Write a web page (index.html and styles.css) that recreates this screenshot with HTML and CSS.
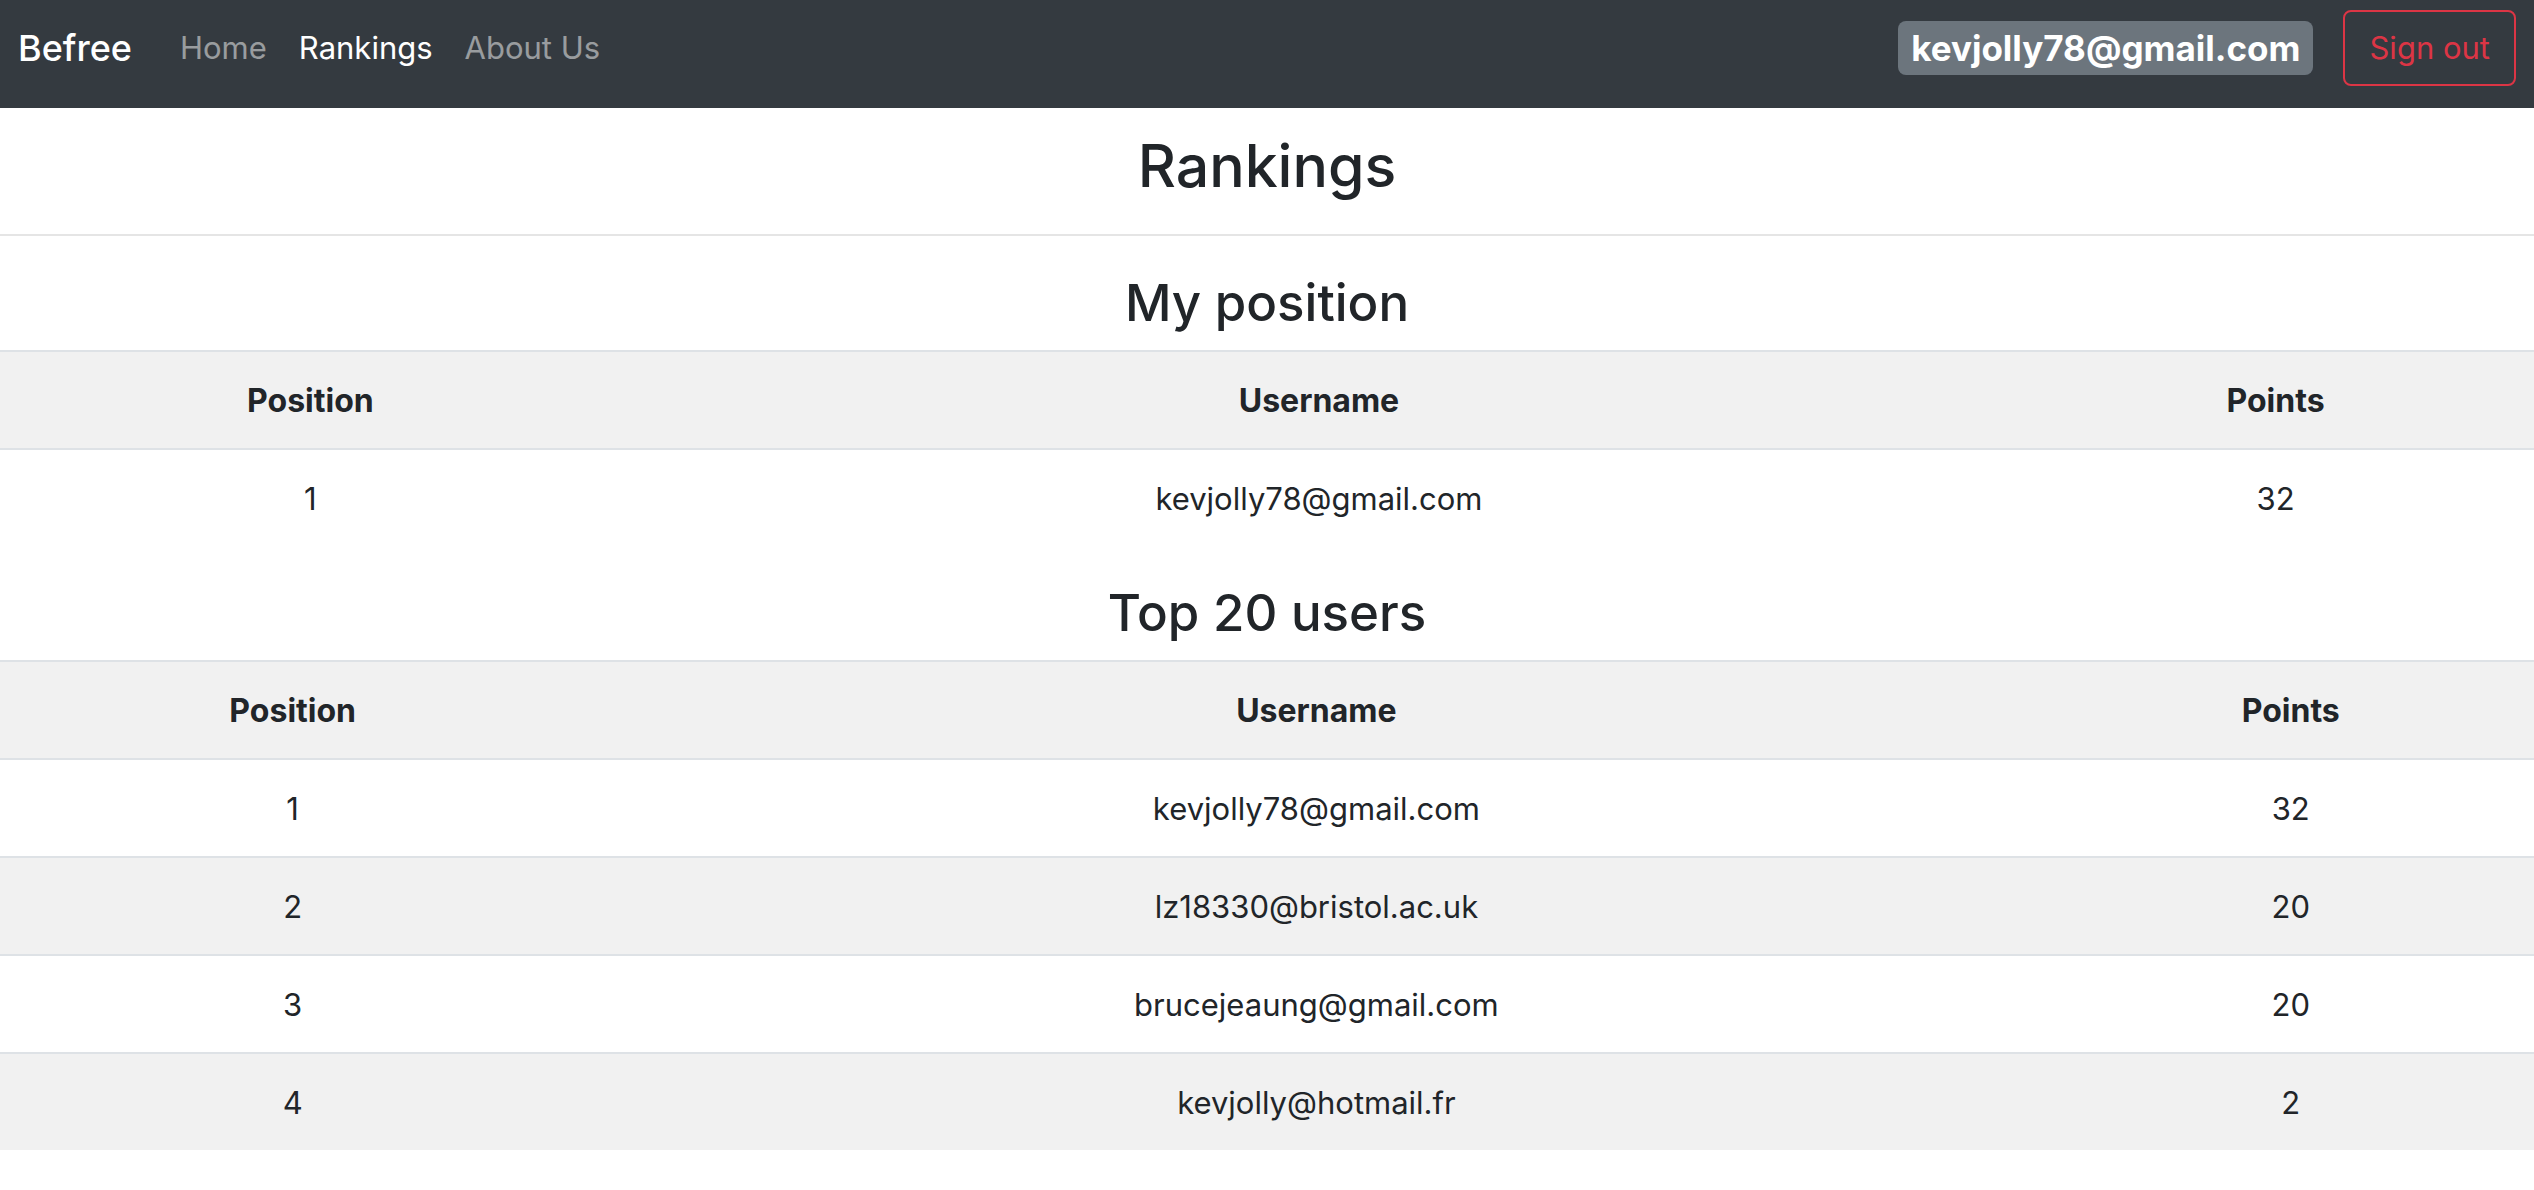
FILE: index.html
```html
<!DOCTYPE html>
<html lang="en">
<head>
<meta charset="utf-8">
<title>Befree - Rankings</title>
<link rel="stylesheet" href="styles.css">
</head>
<body>
<header class="navbar">
  <a class="brand" href="#">Befree</a>
  <nav class="nav">
    <a class="nav-link" href="#">Home</a>
    <a class="nav-link active" href="#" aria-current="page">Rankings</a>
    <a class="nav-link" href="#">About Us</a>
  </nav>
  <span class="badge">kevjolly78@gmail.com</span>
  <button class="sign-out" type="button">Sign out</button>
</header>
<main>
  <h1 class="title">Rankings</h1>
  <hr class="rule">
  <section class="section">
    <h2 class="subtitle">My position</h2>
    <table class="table table-own">
      <thead>
        <tr><th class="col-position" scope="col">Position</th><th scope="col">Username</th><th class="col-points" scope="col">Points</th></tr>
      </thead>
      <tbody>
        <tr><td>1</td><td>kevjolly78@gmail.com</td><td>32</td></tr>
      </tbody>
    </table>
  </section>
  <section class="section">
    <h2 class="subtitle">Top 20 users</h2>
    <table class="table table-top">
      <thead>
        <tr><th class="col-position" scope="col">Position</th><th scope="col">Username</th><th class="col-points" scope="col">Points</th></tr>
      </thead>
      <tbody>
        <tr><td>1</td><td>kevjolly78@gmail.com</td><td>32</td></tr>
        <tr><td>2</td><td>lz18330@bristol.ac.uk</td><td>20</td></tr>
        <tr><td>3</td><td>brucejeaung@gmail.com</td><td>20</td></tr>
        <tr><td>4</td><td>kevjolly@hotmail.fr</td><td>2</td></tr>
      </tbody>
    </table>
  </section>
</main>
</body>
</html>
```
FILE: styles.css
```css
* { box-sizing: border-box; }

body {
  margin: 0;
  background: #fff;
  color: #212529;
  font-family: Inter, "Liberation Sans", sans-serif;
  font-size: 31px;
  line-height: 48px;
}

.navbar {
  display: flex;
  align-items: center;
  padding: 10px 18px 22px;
  background: #343a40;
}

.brand {
  margin-right: 32px;
  color: #fff;
  font-size: 36px;
  font-weight: 500;
  text-decoration: none;
}

.nav {
  display: flex;
  flex: 1;
}

.nav-link {
  padding: 0 16px;
  color: rgba(255, 255, 255, 0.5);
  text-decoration: none;
}

.nav-link.active { color: #fff; }

.badge {
  margin-right: 30px;
  padding: 9px 13px;
  border-radius: 8px;
  background: #6c757d;
  color: #fff;
  font-size: 35px;
  font-weight: 700;
  line-height: 36px;
}

.sign-out {
  padding: 12px 24px;
  border: 2px solid #dc3545;
  border-radius: 8px;
  background: transparent;
  color: #dc3545;
  font: inherit;
}

.title,
.subtitle {
  font-weight: 500;
  text-align: center;
}

.title {
  margin: 22px 0 0;
  font-size: 59px;
  line-height: 72px;
}

.rule {
  margin: 32px 0;
  border: 0;
  border-top: 2px solid #e5e5e5;
}

.section { margin-bottom: 32px; }

.section:last-child { margin-bottom: 0; }

.subtitle {
  margin: 0 0 16px;
  padding-top: 4px;
  font-size: 51px;
  line-height: 62px;
}

.table {
  width: 100%;
  table-layout: fixed;
  border-spacing: 0;
  text-align: center;
}

.table th,
.table td {
  padding: 25px 24px 23px;
  border-top: 2px solid #dee2e6;
}

.table th {
  font-size: 32px;
  font-weight: 700;
}

.table thead tr,
.table tbody tr:nth-child(even) { background: #f1f1f1; }

.table-own .col-position { width: 24.5%; }
.table-own .col-points { width: 20.4%; }
.table-top .col-position { width: 23.1%; }
.table-top .col-points { width: 19.2%; }
```
